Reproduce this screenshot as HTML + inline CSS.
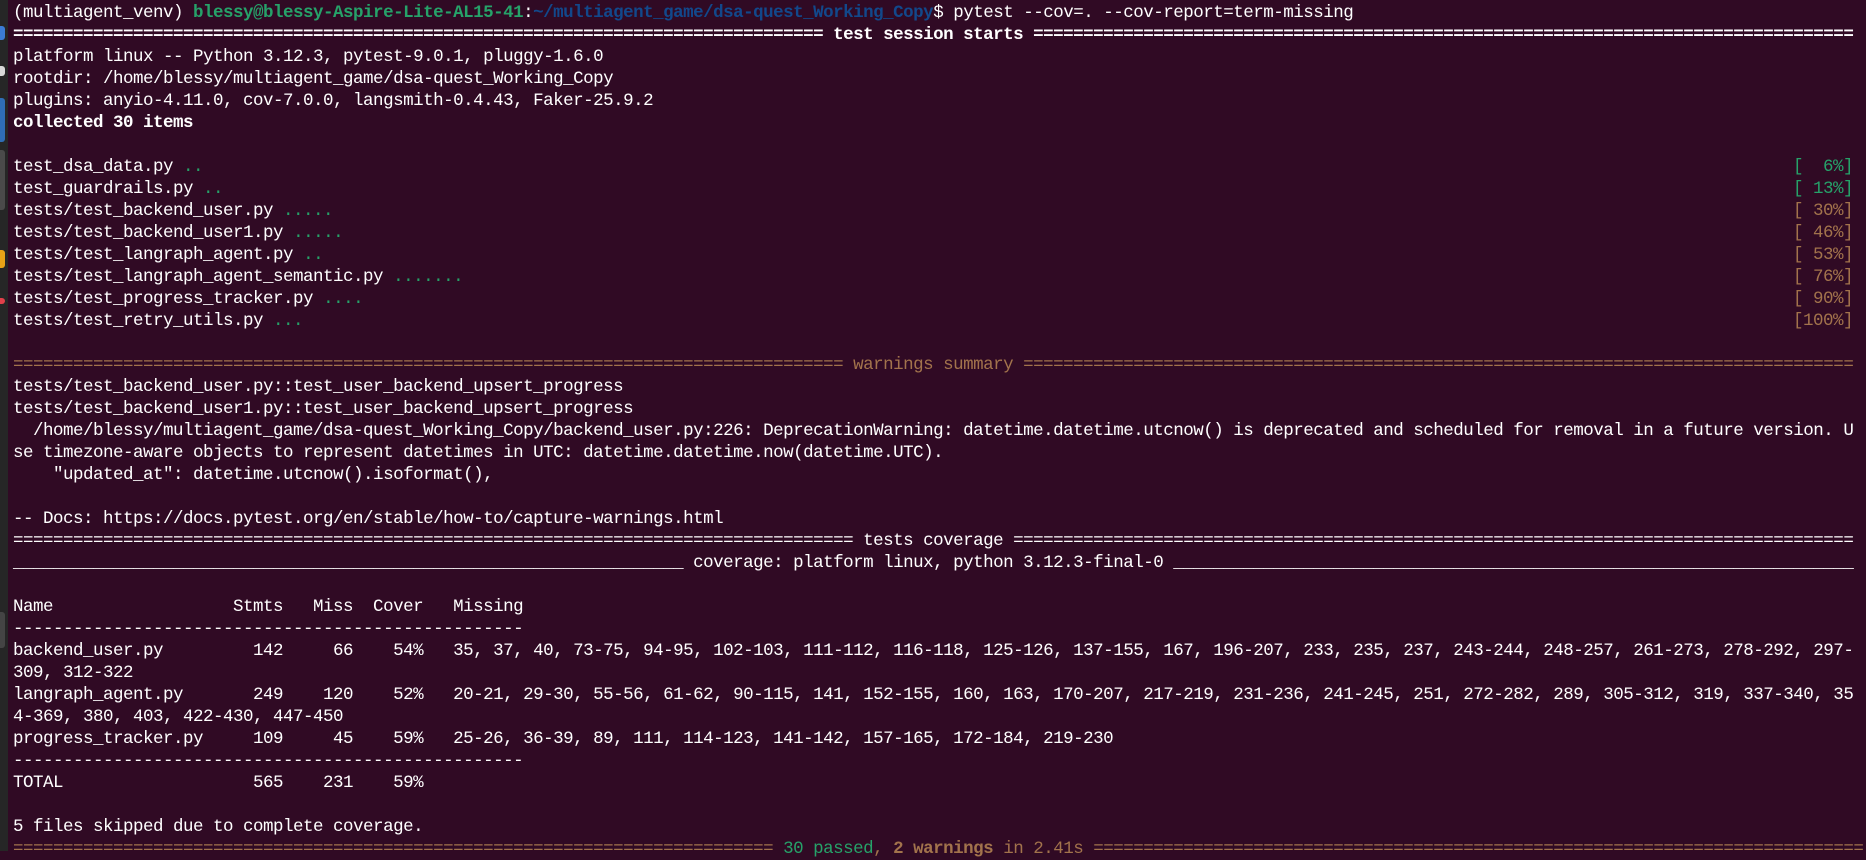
<!DOCTYPE html>
<html><head><meta charset="utf-8">
<style>
html,body{margin:0;padding:0;}
body{width:1866px;height:851px;overflow:hidden;background:#300a24;position:relative;}
#strip{position:absolute;left:0;top:0;width:8px;height:851px;background:#262626;}
.d{position:absolute;left:0;width:5px;border-radius:0 3px 3px 0;}
#t{position:absolute;left:13px;top:2px;font-family:"Liberation Mono",monospace;font-size:17.5px;letter-spacing:-0.5px;color:#ffffff;}
.l{height:22px;line-height:22px;white-space:pre;}
.g{color:#26a269}.gb{color:#26a269;font-weight:bold}.bb{color:#12488b;font-weight:bold}
.y{color:#a2734c}.yb{color:#a2734c;font-weight:bold}.b{font-weight:bold}
.r{display:flex;justify-content:space-between;width:1840px;}
</style></head><body>
<div id="strip"></div>
<div class="d" style="top:26px;height:14px;background:#3b7bd4"></div>
<div class="d" style="top:66px;height:10px;background:#d8d8d8"></div>
<div class="d" style="top:98px;height:44px;background:#2f6db5"></div>
<div class="d" style="top:150px;height:60px;background:#4a4a4a"></div>
<div class="d" style="top:250px;height:18px;background:#e8a317"></div>
<div class="d" style="top:298px;height:6px;background:#e0404a"></div>
<div class="d" style="top:612px;height:36px;background:#444"></div>
<div id="t">
<div class="l">(multiagent_venv) <span class="gb">blessy@blessy-Aspire-Lite-AL15-41</span>:<span class="bb">~/multiagent_game/dsa-quest_Working_Copy</span>$ pytest --cov=. --cov-report=term-missing</div>
<div class="l b">================================================================================= test session starts ==================================================================================</div>
<div class="l">platform linux -- Python 3.12.3, pytest-9.0.1, pluggy-1.6.0</div>
<div class="l">rootdir: /home/blessy/multiagent_game/dsa-quest_Working_Copy</div>
<div class="l">plugins: anyio-4.11.0, cov-7.0.0, langsmith-0.4.43, Faker-25.9.2</div>
<div class="l b">collected 30 items</div>
<div class="l"> </div>
<div class="l r"><span>test_dsa_data.py <span class="g">..</span></span><span class="g">[  6%]</span></div>
<div class="l r"><span>test_guardrails.py <span class="g">..</span></span><span class="g">[ 13%]</span></div>
<div class="l r"><span>tests/test_backend_user.py <span class="g">.....</span></span><span class="y">[ 30%]</span></div>
<div class="l r"><span>tests/test_backend_user1.py <span class="g">.....</span></span><span class="y">[ 46%]</span></div>
<div class="l r"><span>tests/test_langraph_agent.py <span class="g">..</span></span><span class="y">[ 53%]</span></div>
<div class="l r"><span>tests/test_langraph_agent_semantic.py <span class="g">.......</span></span><span class="y">[ 76%]</span></div>
<div class="l r"><span>tests/test_progress_tracker.py <span class="g">....</span></span><span class="y">[ 90%]</span></div>
<div class="l r"><span>tests/test_retry_utils.py <span class="g">...</span></span><span class="y">[100%]</span></div>
<div class="l"> </div>
<div class="l y">=================================================================================== warnings summary ===================================================================================</div>
<div class="l">tests/test_backend_user.py::test_user_backend_upsert_progress</div>
<div class="l">tests/test_backend_user1.py::test_user_backend_upsert_progress</div>
<div class="l">  /home/blessy/multiagent_game/dsa-quest_Working_Copy/backend_user.py:226: DeprecationWarning: datetime.datetime.utcnow() is deprecated and scheduled for removal in a future version. U</div>
<div class="l">se timezone-aware objects to represent datetimes in UTC: datetime.datetime.now(datetime.UTC).</div>
<div class="l">    "updated_at": datetime.utcnow().isoformat(),</div>
<div class="l"> </div>
<div class="l">-- Docs: https://docs.pytest.org/en/stable/how-to/capture-warnings.html</div>
<div class="l">==================================================================================== tests coverage ====================================================================================</div>
<div class="l">___________________________________________________________________ coverage: platform linux, python 3.12.3-final-0 ____________________________________________________________________</div>
<div class="l"> </div>
<div class="l">Name                  Stmts   Miss  Cover   Missing</div>
<div class="l">---------------------------------------------------</div>
<div class="l">backend_user.py         142     66    54%   35, 37, 40, 73-75, 94-95, 102-103, 111-112, 116-118, 125-126, 137-155, 167, 196-207, 233, 235, 237, 243-244, 248-257, 261-273, 278-292, 297-</div>
<div class="l">309, 312-322</div>
<div class="l">langraph_agent.py       249    120    52%   20-21, 29-30, 55-56, 61-62, 90-115, 141, 152-155, 160, 163, 170-207, 217-219, 231-236, 241-245, 251, 272-282, 289, 305-312, 319, 337-340, 35</div>
<div class="l">4-369, 380, 403, 422-430, 447-450</div>
<div class="l">progress_tracker.py     109     45    59%   25-26, 36-39, 89, 111, 114-123, 141-142, 157-165, 172-184, 219-230</div>
<div class="l">---------------------------------------------------</div>
<div class="l">TOTAL                   565    231    59%</div>
<div class="l"> </div>
<div class="l">5 files skipped due to complete coverage.</div>
<div class="l y">============================================================================ <span class="g">30 passed</span>, <span class="yb">2 warnings</span> in 2.41s =============================================================================</div>
</div>
</body></html>
